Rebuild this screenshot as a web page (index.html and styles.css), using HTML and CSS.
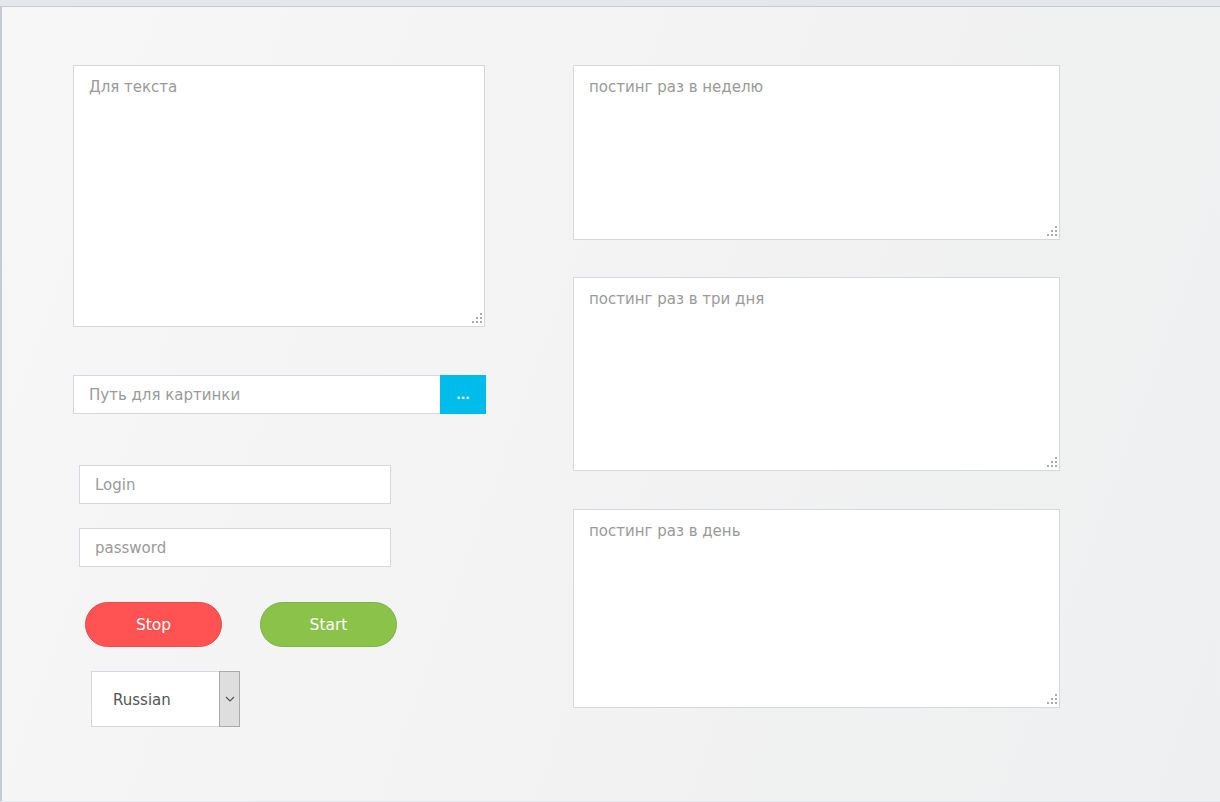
FILE: index.html
```html
<!DOCTYPE html>
<html lang="ru">
<head>
    <meta charset="UTF-8">
    <title>Poster</title>
    <link rel="stylesheet" href="styles.css">
</head>
<body>
    <div class="window">
        <div class="layout">
            <div class="left-col">
                <div class="area-wrap area-main">
                    <textarea placeholder="Для текста"></textarea>
                </div>

                <div class="path-row">
                    <input type="text" class="path-input" placeholder="Путь для картинки">
                    <button class="browse-btn">...</button>
                </div>

                <input type="text" class="field login" placeholder="Login">
                <input type="text" class="field password" placeholder="password">

                <div class="actions">
                    <button class="pill stop">Stop</button>
                    <button class="pill start">Start</button>
                </div>

                <div class="lang-select">
                    <span class="lang-value">Russian</span>
                    <span class="lang-arrow">
                        <svg width="10" height="6" viewBox="0 0 10 6"><path d="M1 1l4 4 4-4" fill="none" stroke="#555" stroke-width="1.2"/></svg>
                    </span>
                </div>
            </div>

            <div class="right-col">
                <div class="area-wrap area-week">
                    <textarea placeholder="постинг раз в неделю"></textarea>
                </div>
                <div class="area-wrap area-three">
                    <textarea placeholder="постинг раз в три дня"></textarea>
                </div>
                <div class="area-wrap area-day">
                    <textarea placeholder="постинг раз в день"></textarea>
                </div>
            </div>
        </div>
    </div>
</body>
</html>
```

FILE: styles.css
```css
html, body {
    margin: 0;
    height: 100%;
}
body {
    font-family: "DejaVu Sans", "Noto Sans", sans-serif;
    background: #e4e7ec;
    overflow: hidden;
}
.window {
    height: calc(100% - 7px);
    margin-top: 6px;
    border-top: 1px solid #c6cad1;
    border-left: 2px solid #c3cbd6;
    background: linear-gradient(110deg, #f7f7f7 0%, #f3f3f3 45%, #eeeff0 100%);
    box-sizing: border-box;
    padding: 58px 0 0 71px;
}
.layout {
    display: flex;
    gap: 88px;
}
.left-col {
    width: 412px;
    display: flex;
    flex-direction: column;
    align-items: flex-start;
}
.right-col {
    width: 487px;
    display: flex;
    flex-direction: column;
}
.area-wrap {
    position: relative;
    width: 100%;
}
.area-wrap::after {
    content: "";
    position: absolute;
    right: 3px;
    bottom: 4px;
    width: 2px;
    height: 2px;
    background: #ababab;
    box-shadow: -4px 0 #ababab, -8px 0 #ababab, 0 -4px #ababab, -4px -4px #ababab, 0 -8px #ababab;
}
textarea {
    display: block;
    width: 100%;
    height: 100%;
    box-sizing: border-box;
    resize: none;
    border: 1px solid #d5d8de;
    background: #fff;
    padding: 12px 15px;
    font-family: inherit;
    font-size: 15px;
    color: #444;
    outline: none;
}
textarea::placeholder, input::placeholder {
    color: #9a9a9a;
}
.area-main {
    height: 262px;
}
.area-week {
    height: 175px;
}
.area-three {
    height: 194px;
    margin-top: 37px;
}
.area-day {
    height: 199px;
    margin-top: 38px;
}
.path-row {
    display: flex;
    margin-top: 48px;
    width: 413px;
    height: 39px;
}
.path-input {
    flex: 1;
    box-sizing: border-box;
    border: 1px solid #d5d8de;
    border-right: none;
    padding: 1px 15px 0;
    font-family: inherit;
    font-size: 15px;
    outline: none;
}
.browse-btn {
    width: 46px;
    border: none;
    background: #00bceb;
    color: #fff;
    font-family: inherit;
    font-size: 12px;
    font-weight: bold;
    padding: 0;
    cursor: pointer;
}
.field {
    width: 312px;
    height: 39px;
    box-sizing: border-box;
    margin-left: 6px;
    border: 1px solid #d5d8de;
    padding: 1px 15px 0;
    font-family: inherit;
    font-size: 15px;
    outline: none;
}
.login {
    margin-top: 51px;
}
.password {
    margin-top: 24px;
}
.actions {
    display: flex;
    gap: 38px;
    margin: 35px 0 0 12px;
}
.pill {
    width: 137px;
    height: 45px;
    border-radius: 23px;
    color: #fff;
    font-family: inherit;
    font-size: 15.5px;
    padding-top: 1px;
    cursor: pointer;
}
.stop {
    background: #ff5252;
    border: 1px solid #ee4a4a;
}
.start {
    background: #8bc34a;
    border: 1px solid #7cb342;
}
.lang-select {
    display: flex;
    margin: 24px 0 0 18px;
    width: 149px;
    height: 56px;
    box-sizing: border-box;
    border: 1px solid #d5d8de;
    background: #fff;
}
.lang-value {
    flex: 1;
    display: flex;
    align-items: center;
    padding: 2px 0 0 21px;
    font-size: 15px;
    color: #555;
}
.lang-arrow {
    width: 19px;
    display: flex;
    align-items: center;
    justify-content: center;
    background: #dedede;
    border: 1px solid #aaa;
    margin: -1px -1px -1px 0;
}
```
